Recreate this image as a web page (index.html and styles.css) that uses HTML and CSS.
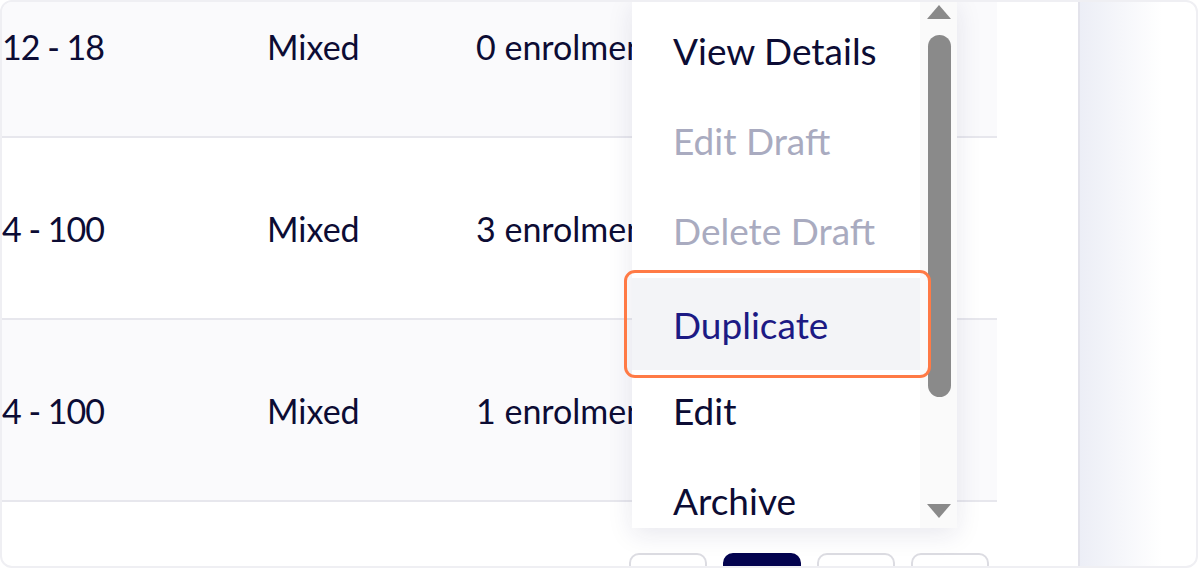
FILE: index.html
```html
<!DOCTYPE html>
<html>
<head>
<meta charset="utf-8">
<link rel="stylesheet" href="styles.css">
</head>
<body>
<div class="card">
  <div class="table-area">
    <div class="rows">
      <div class="row alt"><span class="c1">12 - 18</span><span class="c2">Mixed</span><span class="c3">0 enrolments</span></div>
      <div class="row"><span class="c1">4 - 100</span><span class="c2">Mixed</span><span class="c3">3 enrolments</span></div>
      <div class="row alt"><span class="c1">4 - 100</span><span class="c2">Mixed</span><span class="c3">1 enrolment</span></div>
    </div>
    <div class="pager">
      <div class="pbtn"></div>
      <div class="pbtn active"></div>
      <div class="pbtn"></div>
      <div class="pbtn"></div>
    </div>
  </div>
  <div class="gap"></div>
  <div class="shade"></div>
  <div class="menu">
    <ul class="items">
      <li class="item">View Details</li>
      <li class="item disabled">Edit Draft</li>
      <li class="item disabled">Delete Draft</li>
      <li class="item hover">Duplicate</li>
      <li class="item">Edit</li>
      <li class="item">Archive</li>
    </ul>
    <div class="sbar">
      <div class="arrow up"></div>
      <div class="thumb"></div>
      <div class="track"></div>
      <div class="arrow down"></div>
    </div>
  </div>
  <div class="focus-ring"></div>
</div>
</body>
</html>
```
FILE: styles.css
```css
* { box-sizing: border-box; }
html, body {
  margin: 0;
  padding: 0;
  width: 1200px;
  height: 569px;
  overflow: hidden;
  background: #ffffff;
  font-family: "Lato", "Noto Sans", sans-serif;
}
.card {
  position: relative;
  width: 1198px;
  height: 568px;
  border: 2px solid #efeff3;
  border-radius: 12px;
  display: flex;
  overflow: hidden;
  background: #ffffff;
}
.table-area {
  width: 995px;
  flex: none;
  display: flex;
  flex-direction: column;
}
.rows {
  margin-top: -46px;
  display: flex;
  flex-direction: column;
}
.row {
  height: 182px;
  border-bottom: 2px solid #e7e7ed;
  display: flex;
  align-items: center;
  padding-left: 0;
  font-size: 34px;
  color: #0c0c34;
  white-space: nowrap;
  overflow: hidden;
}
.row.alt { background: #fafafc; }
.c1 { width: 265px; flex: none; letter-spacing: -1px; }
.c2 { width: 209px; flex: none; }
.c3 { flex: none; }
.pager {
  margin-top: 51px;
  display: flex;
  justify-content: flex-end;
  gap: 16px;
  padding-right: 8px;
}
.pbtn {
  width: 78px;
  height: 50px;
  border: 2px solid #dcdce2;
  border-radius: 10px;
  background: #ffffff;
}
.pbtn.active {
  background: #03034f;
  border-color: #03034f;
}
.gap { width: 81px; flex: none; }
.shade {
  width: 84px;
  flex: none;
  border-left: 2px solid #e3e3eb;
  background: linear-gradient(to right, #eceef6, #ffffff);
}
.menu {
  position: absolute;
  left: 630px;
  top: -2px;
  width: 325px;
  height: 528px;
  background: #ffffff;
  box-shadow: 0 6px 24px rgba(30, 30, 90, 0.10);
  display: flex;
  overflow: hidden;
}
.items {
  list-style: none;
  margin: 0;
  padding: 5px 0 0 0;
  width: 288px;
  flex: none;
}
.item {
  height: 90px;
  display: flex;
  align-items: center;
  padding-left: 41px;
  font-size: 37px;
  color: #0c0c34;
  white-space: nowrap;
}
.item.disabled { color: #a9abc0; }
.item.hover {
  background: #f3f4f7;
  color: #1c1a84;
  margin-top: 3px;
  height: 92px;
  margin-bottom: -5px;
}
.sbar {
  flex: 1;
  background: #fafafa;
  display: flex;
  flex-direction: column;
  align-items: center;
  padding: 5px 0 10px 1px;
}
.arrow {
  width: 0;
  height: 0;
  border-left: 12px solid transparent;
  border-right: 12px solid transparent;
  flex: none;
}
.arrow.up { border-bottom: 14px solid #8a8a8a; }
.arrow.down { border-top: 14px solid #8a8a8a; }
.thumb {
  margin-top: 16px;
  width: 23px;
  height: 362px;
  border-radius: 12px;
  background: #8a8a8a;
  flex: none;
}
.track { flex: 1; }
.focus-ring {
  position: absolute;
  left: 622px;
  top: 268px;
  width: 307px;
  height: 108px;
  border: 3px solid #ff7a45;
  border-radius: 11px;
  pointer-events: none;
}
```
